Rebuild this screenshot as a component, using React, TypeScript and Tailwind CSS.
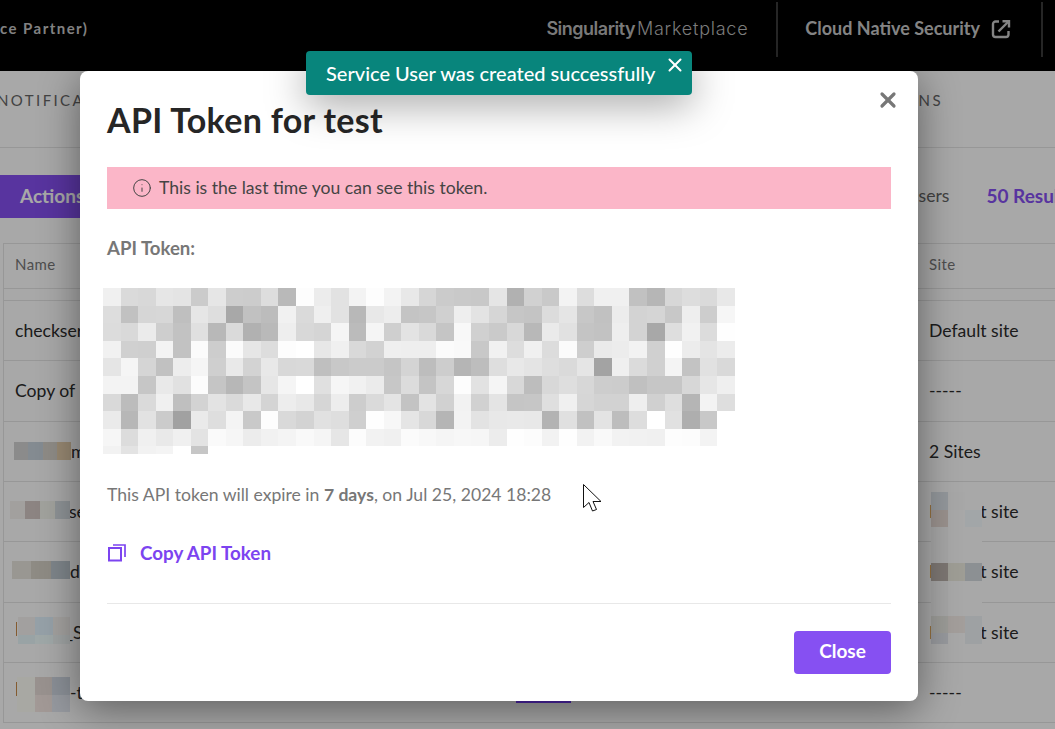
import { Info, X } from "lucide-react";

/** Censored token, one row of grey levels per line (hex, two chars per block) */
const tokenRows = [
    "f0dad8e6e4cbe6cdccddb9fdece2f3fdf3e8d6cbc9c8e5b1d1c9f3ddf0f0c1b6d7ddda e8",
    "ddc1d6d7bfe6dea8c1bcf1daefe2b8e8edc4c6d0eee3d6c6c4dce5c7c1ecd3d5c8eecd f6",
    "dcd9ebcec2e0b8dab1b9eed8d5f5bbf5cfe3d9c5f8d0cad8b8eae1c4c2eed3a8def1dc fe",
    "f1d0cff3c2fbcdfbe6ddfdffe7f0d9d2efeeeefbf9c8f1ddf0dcfbceeaecf2d0feece4 ec",
    "e5f5d5c1edf5cfe9d3e8d8d9bfc8cbcbc5d4bdcdb5bddee8e4dedae5a3efdbd0f4c3e1 d9",
    "f3f3c6e9e1fcc5b7c4e6f5ffe0f6f1ebc7dcc4d7fde2f5d8bdd8ded7cdccc0c6c6d7e6 ef",
    "d9bcdaf0bfd3e3dae8d4ede8d6edcddae4c3e3d1f2d1e4c5c6dff0d6d2d2eed0deb5f3 de",
    "eab7e2cba1eadef4c9fdd9d3e1decffef7e5d8b5f3e3e8e9e8b3e0c1e3bdddffe1aec8 ff",
    "f6dcf0e9f0e3faf6ecf1f4f9f5e6fcf2f0fbf8f5f7f6ecfefcf2fef2f9f2f1f0fdfcf3 ff",
];
const tokenTail = ["#f2f2f2", "#e3e3e3", "#f2f2f2", "#f4f4f4", "#ffffff", "#c6c6c6"];

const toCells = (row: string) => {
    const clean = row.replace(" ", "");
    const cells: string[] = [];
    for (let i = 0; i < clean.length; i += 2) {
        const v = clean.slice(i, i + 2);
        cells.push(`#${v}${v}${v}`);
    }
    return cells;
};

/** Row of blurred blocks sitting over a table cell */
const Blocks = ({ colors, className }: { colors: string[]; className: string }) => (
    <div className={`flex ${className}`}>
        {colors.map((c, i) => (
            <div key={i} className="h-full flex-1" style={{ backgroundColor: c }} />
        ))}
    </div>
);

const rows = [
    { name: "checkservice", site: "Default site", indent: "pl-[11px]" },
    { name: "Copy of", site: "-----", indent: "pl-[11px]" },
    { name: "m", site: "2 Sites", indent: "pl-[67px]" },
    { name: "se", site: "Default site", indent: "pl-[65px]" },
    { name: "d", site: "Default site", indent: "pl-[66px]" },
    { name: "_S", site: "Default site", indent: "pl-[61px]" },
    { name: "-t", site: "-----", indent: "pl-[66px]" },
];

const App = () => {
    return (
        <div className="relative h-[729px] w-[1055px] overflow-hidden bg-white font-['Lato',sans-serif]">
            {/* top bar */}
            <header className="flex h-[71px] items-center justify-between bg-black">
                <span className="-mt-[14px] text-[15px] font-bold tracking-[1.45px] text-[#c4c4c4]">
                    ce Partner)
                </span>
                <div className="flex items-center">
                    <div className="-mt-[14px] flex items-baseline text-[#bdbdbd]">
                        <span className="font-['Inter',sans-serif] text-[18px] font-semibold tracking-[-0.5px]">
                            Singularity
                        </span>
                        <span className="ml-[2px] font-['Inter',sans-serif] text-[18px] font-light tracking-[0.75px]">
                            Marketplace
                        </span>
                    </div>
                    <div className="-mt-[13px] ml-[28px] h-[55px] w-[2px] bg-[#3a3a3a]" />
                    <span className="-mt-[14px] ml-[27px] text-[18px] font-bold text-[#c8c8c8]">
                        Cloud Native Security
                    </span>
                    <svg
                        className="-mt-[13px] ml-[11px] h-[20px] w-[20px] text-[#c8c8c8]"
                        viewBox="0 0 20 20"
                        fill="none"
                        stroke="currentColor"
                        strokeWidth="2.4"
                    >
                        <path d="M8 2.5H4.5A2.5 2.5 0 0 0 2 5v10.5A2.5 2.5 0 0 0 4.5 18H15a2.5 2.5 0 0 0 2.5-2.5V12" />
                        <path d="M7.5 12.5L17 3" />
                        <path d="M11.5 2.2H18V8.5" />
                    </svg>
                    <div className="-mt-[13px] ml-[30px] h-[55px] w-[2px] bg-[#3a3a3a]" />
                    <div className="w-[12px]" />
                </div>
            </header>

            {/* tabs */}
            <nav className="flex h-[77px] items-center justify-between border-b border-[#e6e6e6] pb-[18px] text-[15px] tracking-[2.4px] text-[#666666]">
                <span className="-ml-[3px]">NOTIFICATIONS</span>
                <span className="mr-[112px]">INTEGRATIONS</span>
            </nav>

            {/* toolbar */}
            <div className="flex h-[95px] items-center justify-between pt-[2px]">
                <div className="flex h-[43px] w-[120px] items-center rounded-r bg-[#8650f2] pl-[20px] text-[19px] font-bold text-white">
                    Actions
                </div>
                <div className="-mr-[19px] flex items-center gap-[37px]">
                    <span className="text-[17.6px] text-[#666666]">Service Users</span>
                    <span className="text-[19px] font-bold text-[#8650f2]">50 Results</span>
                </div>
            </div>

            {/* table */}
            <div className="relative ml-[3px] border-t border-l border-[#e6e6e6] text-[17.6px] text-[#2b2b2b]">
                <div className="grid h-[45px] grid-cols-[925px_1fr] items-center border-b border-[#e6e6e6] pb-[4px] text-[15px] tracking-[0.4px] text-[#777777]">
                    <span className="pl-[11px]">Name</span>
                    <span>Site</span>
                </div>
                <div className="h-[12px] border-b border-[#e6e6e6]" />
                {rows.map((row) => (
                    <div
                        key={row.name}
                        className="grid h-[60.33px] grid-cols-[925px_1fr] items-center border-b border-[#e6e6e6] pt-px"
                    >
                        <span className={row.indent}>{row.name}</span>
                        <span>{row.site}</span>
                    </div>
                ))}

                {/* blurred names */}
                <Blocks className="absolute left-[10px] top-[198px] h-[18px] w-[57px]" colors={["#d4d4d4", "#c9d4dd", "#d8d4cc", "#e6cfae"]} />
                <Blocks className="absolute left-[6px] top-[257px] h-[18px] w-[60px]" colors={["#f6f3f0", "#d5c9c6", "#f5f6ef", "#d8e0e4"]} />
                <Blocks className="absolute left-[8px] top-[317px] h-[18px] w-[58px]" colors={["#e8e6de", "#d8d4c9", "#c0cad2"]} />
                <Blocks className="absolute left-[14px] top-[373px] h-[18px] w-[52px]" colors={["#f6f3f2", "#e4f4ff", "#f8f5f2"]} />
                <Blocks className="absolute left-[14px] top-[391px] h-[9px] w-[52px]" colors={["#e8f8fa", "#f2ffff", "#f2f8f8"]} />
                <Blocks className="absolute left-[13px] top-[433px] h-[18px] w-[53px]" colors={["#fffff8", "#e8ded9", "#d2d9e4"]} />
                <Blocks className="absolute left-[13px] top-[451px] h-[17px] w-[53px]" colors={["#fffff8", "#f6e9e4", "#e4e9f1"]} />

                {/* first letters peeking out beside the blur */}
                <div className="absolute left-[12px] top-[378px] h-[14px] w-px bg-[#c98a4a]" />
                <div className="absolute left-[12px] top-[438px] h-[14px] w-px bg-[#c98a4a]" />

                {/* blurred sites */}
                <Blocks className="absolute left-[927px] top-[248px] h-[18px] w-[51px]" colors={["#e0e6ec", "#fefefe", "#ffffff"]} />
                <Blocks className="absolute left-[927px] top-[266px] h-[17px] w-[51px]" colors={["#e9ddd7", "#ffffff", "#f6fcff"]} />
                <Blocks className="absolute left-[927px] top-[283px] h-[36px] w-[51px]" colors={["#fafafa", "#ffffff", "#ffffff"]} />
                <Blocks className="absolute left-[927px] top-[319px] h-[18px] w-[51px]" colors={["#bcb4ae", "#f0eee2", "#d5dbe0"]} />
                <Blocks className="absolute left-[927px] top-[337px] h-[36px] w-[51px]" colors={["#fafafa", "#ffffff", "#ffffff"]} />
                <Blocks className="absolute left-[927px] top-[372px] h-[17px] w-[51px]" colors={["#ecebe6", "#f8f0ec", "#f0f4f8"]} />
                <Blocks className="absolute left-[927px] top-[389px] h-[11px] w-[51px]" colors={["#e6e9ef", "#ffffff", "#f0f5f8"]} />
            </div>

            {/* dimmed page */}
            <div className="absolute inset-0 bg-black/[.34]" />

            {/* link peeking out under the modal */}
            <div className="absolute left-[516px] top-[701px] h-[2px] w-[55px] bg-[#4c25a8]" />

            {/* modal */}
            <div className="absolute left-[80px] top-[71px] flex h-[630px] w-[838px] flex-col rounded-[8px] bg-white px-[27px] shadow-[0_8px_40px_rgba(0,0,0,0.45)]">
                <button className="absolute right-[18px] top-[17px] text-[#777777]">
                    <X className="h-[24px] w-[24px]" strokeWidth={3.2} />
                </button>
                <h2 className="mt-[27px] h-[43px] text-[34px] leading-[43px] font-bold tracking-[0.3px] text-[#262626]">
                    API Token for test
                </h2>
                <div className="mt-[26px] flex h-[42px] items-center bg-[#fbb6c8] pl-[25px] text-[17.6px] text-[#444444]">
                    <Info className="h-[20px] w-[20px] text-[#444444]" strokeWidth={1.2} />
                    <span className="ml-[7px]">This is the last time you can see this token.</span>
                </div>
                <div className="mt-[27px] h-[24px] text-[18.6px] leading-[24px] font-bold text-[#777777]">API Token:</div>

                {/* pixelated token */}
                <div className="-ml-[4px] mt-[28px] h-[167px] w-[632px]">
                    {tokenRows.map((row, i) => (
                        <div key={i} className="flex h-[17.6px]">
                            {toCells(row).map((color, j) => (
                                <div key={j} className="h-full w-[17.55px]" style={{ backgroundColor: color }} />
                            ))}
                        </div>
                    ))}
                    <div className="flex h-[8px]">
                        {tokenTail.map((color, j) => (
                            <div key={j} className="h-full w-[17.55px]" style={{ backgroundColor: color }} />
                        ))}
                    </div>
                </div>

                <p className="mt-[28px] h-[24px] text-[17.6px] leading-[24px] text-[#777777]">
                    This API token will expire in <b className="font-bold">7 days</b>, on Jul 25, 2024 18:28
                </p>

                <div className="mt-[34px] flex h-[24px] items-center text-[18.8px] font-bold text-[#7c44f0]">
                    <svg className="ml-px h-[18px] w-[18px]" viewBox="0 0 18 18" fill="none" stroke="currentColor">
                        <rect x="1" y="4" width="12" height="12.5" strokeWidth="2" />
                        <path d="M5 1H17V13" strokeWidth="1.7" />
                    </svg>
                    <span className="ml-[14px]">Copy API Token</span>
                </div>

                <div className="mt-[38px] border-t border-[#e8e8e8]" />

                <div className="mt-[27px] flex justify-end">
                    <button className="h-[43px] w-[97px] rounded-[4px] bg-[#8650f2] pb-[2px] text-[19px] font-bold text-white">
                        Close
                    </button>
                </div>
            </div>

            {/* mouse pointer */}
            <svg className="absolute left-[583px] top-[484px] h-[28px] w-[19px]" viewBox="0 0 19 28" fill="#ffffff" stroke="#111111" strokeWidth="1">
                <path d="M0.5 0.5V23.5L6 18.5L9.5 27L13.5 25.5L10 17.5H18L0.5 0.5Z" />
            </svg>

            {/* toast */}
            <div className="absolute left-[306px] top-[51px] flex h-[44px] w-[386px] items-center rounded-[4px] bg-[#08857c] pl-[20px] text-[20px] font-medium text-white shadow-[0_10px_40px_rgba(0,0,0,0.35)]">
                Service User was created successfully
                <X className="absolute right-[6px] top-[3px] h-[22px] w-[22px]" strokeWidth={2.2} />
            </div>
        </div>
    );
};

export default App;
